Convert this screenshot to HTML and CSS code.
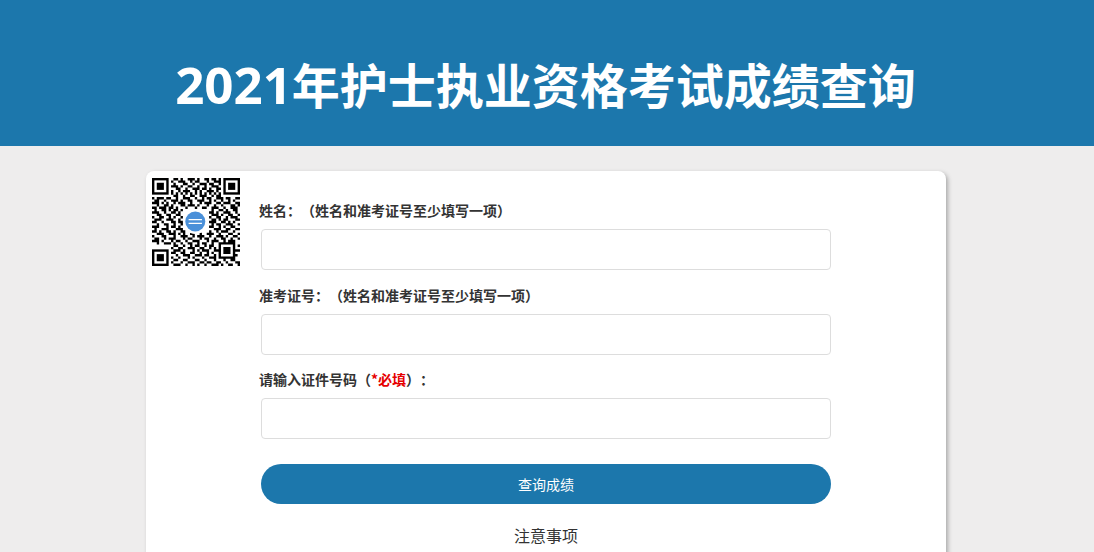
FILE: index.html
```html
<!DOCTYPE html>
<html lang="zh-CN">
<head>
    <meta charset="UTF-8">
    <meta name="viewport" content="width=device-width, initial-scale=1.0">
    <title>2021年护士执业资格考试成绩查询</title>
    <link rel="stylesheet" href="styles.css">
</head>
<body>
    <header class="page-header">
        <h1><span class="year">2021</span>年护士执业资格考试成绩查询</h1>
    </header>
    <main class="query-card">
        <div class="qr-box">
            <svg class="qr-code" viewBox="0 0 37 37" aria-label="二维码">
                <g class="finder">
                    <rect x="0.5" y="0.5" width="6" height="6"/>
                    <rect x="30.5" y="0.5" width="6" height="6"/>
                    <rect x="0.5" y="30.5" width="6" height="6"/>
                </g>
                <rect class="finder-dot" x="2" y="2" width="3" height="3"/>
                <rect class="finder-dot" x="32" y="2" width="3" height="3"/>
                <rect class="finder-dot" x="2" y="32" width="3" height="3"/>
                <path class="modules" d="M9 .5h2M12 .5h1M15 .5h3M19 .5h1M22 .5h2M25 .5h2M28 .5h1
                    M8 1.5h1M11 1.5h3M16 1.5h1M18 1.5h2M23 1.5h1M26 1.5h3
                    M9 2.5h1M13 2.5h2M17 2.5h1M20 2.5h3M24 2.5h2M28 2.5h1
                    M8 3.5h3M12 3.5h1M15 3.5h2M19 3.5h1M22 3.5h1M25 3.5h3
                    M10 4.5h2M14 4.5h1M17 4.5h3M21 4.5h2M24 4.5h1M27 4.5h2
                    M8 5.5h1M11 5.5h1M13 5.5h3M18 5.5h1M20 5.5h1M23 5.5h3M27 5.5h1
                    M8 6.5h1M10 6.5h1M12 6.5h1M14 6.5h1M16 6.5h1M18 6.5h1M20 6.5h1M22 6.5h1M24 6.5h1M26 6.5h1M28 6.5h1
                    M9 7.5h2M13 7.5h1M16 7.5h2M20 7.5h3M25 7.5h1M27 7.5h2
                    M0 8.5h1M2 8.5h3M6 8.5h2M10 8.5h1M13 8.5h3M18 8.5h1M21 8.5h1M23 8.5h2M27 8.5h3M31 8.5h2M35 8.5h2
                    M1 9.5h2M5 9.5h1M8 9.5h3M12 9.5h1M15 9.5h2M19 9.5h3M24 9.5h1M26 9.5h1M29 9.5h1M32 9.5h1M34 9.5h1
                    M0 10.5h3M4 10.5h1M6 10.5h1M9 10.5h1M11 10.5h3M16 10.5h1M20 10.5h1M22 10.5h3M27 10.5h2M30 10.5h3M35 10.5h2
                    M2 11.5h1M5 11.5h2M8 11.5h1M12 11.5h2M15 11.5h3M19 11.5h1M23 11.5h1M26 11.5h1M29 11.5h1M33 11.5h2M36 11.5h1
                    M0 12.5h2M3 12.5h3M7 12.5h2M10 12.5h1M14 12.5h1M18 12.5h1M21 12.5h2M25 12.5h3M30 12.5h1M33 12.5h3
                    M1 13.5h1M4 13.5h2M7 13.5h1M9 13.5h2M12 13.5h1M25 13.5h1M28 13.5h2M31 13.5h1M34 13.5h2
                    M0 14.5h3M5 14.5h1M8 14.5h2M11 14.5h1M24 14.5h2M27 14.5h1M30 14.5h3M35 14.5h1
                    M2 15.5h2M6 15.5h2M10 15.5h2M25 15.5h3M29 15.5h1M32 15.5h2M36 15.5h1
                    M0 16.5h1M3 16.5h2M7 16.5h1M9 16.5h1M12 16.5h1M24 16.5h1M27 16.5h2M31 16.5h1M33 16.5h3
                    M1 17.5h3M6 17.5h3M11 17.5h1M25 17.5h2M28 17.5h1M30 17.5h2M35 17.5h2
                    M0 18.5h2M4 18.5h1M8 18.5h2M11 18.5h2M24 18.5h3M29 18.5h2M32 18.5h1M34 18.5h1
                    M2 19.5h1M5 19.5h2M9 19.5h1M12 19.5h1M25 19.5h1M27 19.5h2M31 19.5h3M36 19.5h1
                    M0 20.5h3M6 20.5h1M8 20.5h2M11 20.5h1M24 20.5h2M28 20.5h1M30 20.5h1M33 20.5h2
                    M1 21.5h1M4 21.5h3M10 21.5h3M26 21.5h3M31 21.5h2M35 21.5h2
                    M0 22.5h2M3 22.5h1M6 22.5h2M9 22.5h1M12 22.5h2M24 22.5h1M27 22.5h1M29 22.5h3M34 22.5h1
                    M2 23.5h3M7 23.5h3M11 23.5h1M13 23.5h1M16 23.5h2M20 23.5h1M23 23.5h3M28 23.5h1M32 23.5h2M36 23.5h1
                    M0 24.5h1M4 24.5h2M9 24.5h1M12 24.5h3M17 24.5h1M19 24.5h3M24 24.5h1M27 24.5h3M31 24.5h1M34 24.5h2
                    M1 25.5h2M5 25.5h1M7 25.5h3M13 25.5h1M15 25.5h2M20 25.5h1M22 25.5h2M26 25.5h1M29 25.5h2M33 25.5h1M36 25.5h1
                    M0 26.5h3M4 26.5h1M8 26.5h1M10 26.5h2M14 26.5h1M17 26.5h3M23 26.5h1M25 26.5h3M30 26.5h1M32 26.5h3
                    M2 27.5h1M5 27.5h3M9 27.5h1M12 27.5h1M15 27.5h2M19 27.5h1M21 27.5h2M25 27.5h1M28 27.5h7
                    M9 28.5h2M13 28.5h1M16 28.5h1M18 28.5h2M22 28.5h1M24 28.5h2M28 28.5h1M34 28.5h1M36 28.5h1
                    M8 29.5h1M11 29.5h2M15 29.5h3M20 29.5h2M24 29.5h1M26 29.5h1M28 29.5h1M30 29.5h3M34 29.5h1
                    M9 30.5h3M13 30.5h1M17 30.5h1M19 30.5h1M21 30.5h3M26 30.5h2M28 30.5h1M30 30.5h3M34 30.5h3
                    M8 31.5h2M12 31.5h2M16 31.5h2M20 31.5h1M23 31.5h1M25 31.5h1M28 31.5h1M30 31.5h3M34 31.5h1
                    M10 32.5h1M13 32.5h3M18 32.5h3M22 32.5h2M26 32.5h1M28 32.5h1M34 32.5h2
                    M8 33.5h1M11 33.5h1M15 33.5h1M17 33.5h1M21 33.5h1M24 33.5h3M28 33.5h7
                    M9 34.5h2M13 34.5h2M18 34.5h2M22 34.5h1M26 34.5h1M30 34.5h1M33 34.5h2
                    M8 35.5h1M12 35.5h1M15 35.5h3M20 35.5h2M23 35.5h2M27 35.5h2M31 35.5h1M35 35.5h2
                    M9 36.5h3M14 36.5h1M17 36.5h1M19 36.5h1M22 36.5h1M25 36.5h3M29 36.5h1M32 36.5h2M36 36.5h1"/>
                <circle class="logo-ring" cx="18.2" cy="18.3" r="5.2"/>
                <circle class="logo" cx="18.2" cy="18.3" r="4.2"/>
                <path class="logo-lines" d="M15.4 17.5h5.6M15.4 19.1h5.6"/>
            </svg>
        </div>
        <form class="query-form">
            <div class="form-group">
                <label for="name">姓名：（姓名和准考证号至少填写一项）</label>
                <input type="text" id="name">
            </div>
            <div class="form-group">
                <label for="ticket">准考证号：（姓名和准考证号至少填写一项）</label>
                <input type="text" id="ticket">
            </div>
            <div class="form-group">
                <label for="idcard">请输入证件号码（<span class="required">*必填</span>）：</label>
                <input type="text" id="idcard">
            </div>
            <button type="button" class="submit-btn">查询成绩</button>
            <p class="notice-title">注意事项</p>
        </form>
    </main>
</body>
</html>
```

FILE: styles.css
```css
html, body {
    height: 100vh;
    overflow: hidden;
}
body {
    margin: 0;
    background: #eeeded;
    font-family: "Noto Sans CJK SC", "Liberation Sans", sans-serif;
    text-spacing-trim: space-all;
    color: #333;
}
.page-header {
    height: 146px;
    background: #1c77ac;
    display: flex;
    justify-content: center;
    align-items: center;
}
.page-header h1 {
    margin: 21px 3px 0 0;
    font-family: "Noto Sans CJK SC", sans-serif;
    font-size: 48px;
    line-height: 60px;
    font-weight: 700;
    color: #fff;
}
.year {
    font-family: "Open Sans", sans-serif;
    font-size: 51px;
}
.query-card {
    width: 800px;
    height: 600px;
    margin: 25px 0 0 146px;
    background: #fff;
    border-radius: 8px;
    box-shadow: 2px 2px 4px #aaa;
    display: flex;
}
.qr-box {
    width: 114px;
    padding: 7px 0 0 6px;
    box-sizing: border-box;
    flex-shrink: 0;
}
.qr-code {
    display: block;
    width: 88px;
    height: 88px;
}
.finder {
    fill: none;
    stroke: #000;
    stroke-width: 1;
}
.finder-dot {
    fill: #000;
}
.modules {
    fill: none;
    stroke: #000;
    stroke-width: 1;
}
.logo-ring {
    fill: #fff;
}
.logo {
    fill: #4a90d9;
}
.logo-lines {
    fill: none;
    stroke: #fff;
    stroke-width: 0.5;
}
.query-form {
    width: 571px;
    padding-top: 30px;
}
.form-group {
    margin-bottom: 15.5px;
}
.form-group label {
    display: block;
    height: 18px;
    line-height: 18px;
    margin: 0 0 10px -1px;
    font-size: 14px;
    font-weight: 700;
}
.form-group input {
    display: block;
    box-sizing: border-box;
    width: 570px;
    height: 41px;
    margin-left: 1px;
    border: 1px solid #ddd;
    border-radius: 4px;
    background: #fff;
}
.required {
    color: #e60000;
}
.submit-btn {
    display: block;
    width: 570px;
    height: 40px;
    margin: 25px 0 0 1px;
    border: none;
    border-radius: 20px;
    background: #1c77ac;
    color: #fff;
    font-family: inherit;
    font-size: 14px;
}
.notice-title {
    margin: 20px 0 0 1px;
    width: 570px;
    line-height: 22px;
    font-size: 16px;
    text-align: center;
}
```
